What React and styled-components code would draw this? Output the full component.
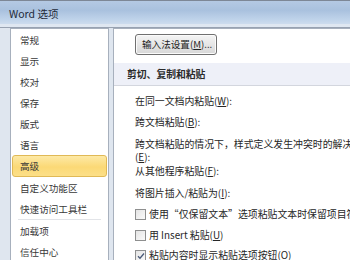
import React from "react";
import styled, { createGlobalStyle } from "styled-components";

const Global = createGlobalStyle`
  html, body { margin: 0; padding: 0; background: #fff; }
  body { font-family: "Noto Sans CJK SC", "Noto Sans", sans-serif; }
`;

const Window = styled.div`
  width: 350px;
  height: 260px;
  display: flex;
  flex-direction: column;
  background: #d5e1ef;
  overflow: hidden;
  border-top: 1px solid #7d8796;
  box-sizing: border-box;
`;

const TitleBar = styled.div`
  flex: none;
  height: 21px;
  display: flex;
  align-items: center;
  padding: 2px 0 0 9px;
  background: linear-gradient(#b4c9e3, #a9c1de 40%, #bfd3ea 80%, #cddced);
  font-size: 10.5px;
  color: #1f2a3a;
  border-bottom: 3px solid #dfe7f1;
`;

const Body = styled.div`
  flex: 1;
  display: flex;
  gap: 4px;
  padding-left: 10px;
  min-height: 0;
  border-top: 1px solid #98a2b1;
  background: #dfe6ef;
`;

const Sidebar = styled.div`
  width: 95px;
  flex: none;
  background: #fff;
  border: 1px solid #a7b0bd;
  border-bottom: none;
  padding: 0 1px;
  display: flex;
  flex-direction: column;
  overflow: hidden;
`;

const NavItem = styled.div`
  flex: none;
  height: 21px;
  display: flex;
  align-items: center;
  padding-left: 8px;
  font-size: 9.6px;
  color: #383838;
  border-radius: 3px;
  box-sizing: border-box;
  ${(p) =>
    p.$active &&
    `
    background: linear-gradient(#fde9a6, #fbd976 55%, #fcdf88);
    border: 1px solid #e0b956;
    padding-left: 7px;
    height: 22px;
  `}
`;

const NavSep = styled.div`
  flex: none;
  height: 1px;
  margin: 0 6px;
  background: #e2e4e8;
`;

const Content = styled.div`
  flex: 1;
  background: #fff;
  border-left: 1px solid #a7b0bd;
  border-top: 1px solid #a7b0bd;
  display: flex;
  flex-direction: column;
  padding-top: 5px;
  min-width: 0;
  overflow: hidden;
`;

const ButtonRow = styled.div`
  flex: none;
  padding-left: 21px;
  height: 20px;
  display: flex;
  align-items: center;
`;

const Button = styled.div`
  height: 19px;
  padding: 0 4px 0 6px;
  display: flex;
  align-items: center;
  border: 1px solid #707070;
  border-radius: 3px;
  background: linear-gradient(#f4f4f4, #e6e6e6 50%, #d8d8d8);
  font-size: 9.6px;
  color: #222;
  box-shadow: inset 0 0 0 1px #fbfbfb;
`;

const SectionHeader = styled.div`
  flex: none;
  margin-top: 9px;
  height: 22px;
  display: flex;
  align-items: center;
  padding-left: 13px;
  background: #eef0f8;
  border-bottom: 1px solid #d3d6de;
  font-size: 9.8px;
  font-weight: 700;
  color: #2a2a2a;
`;

const Rows = styled.div`
  flex: none;
  padding-left: 21px;
  padding-top: 8px;
  display: flex;
  flex-direction: column;
`;

const Row = styled.div`
  flex: none;
  height: ${(p) => p.$h || 21}px;
  display: flex;
  align-items: flex-start;
  white-space: nowrap;
  font-size: 9.9px;
  line-height: 14px;
  color: #262626;
`;

const Box = styled.span`
  width: 9px;
  height: 9px;
  flex: none;
  border: 1px solid #8e8f8f;
  background: linear-gradient(135deg, #e4e4e4, #fafafa);
  margin: 2px 3px 0 0;
  display: inline-flex;
  align-items: center;
  justify-content: center;
`;

const U = styled.span`
  text-decoration: underline;
`;

const Check = ({ checked }) => (
  <Box>
    {checked && (
      <svg width="8" height="8" viewBox="0 0 8 8">
        <path d="M1 4.2 L3 6.2 L7 1.5" fill="none" stroke="#4a5a78" strokeWidth="1.3" />
      </svg>
    )}
  </Box>
);

const nav = ["常规", "显示", "校对", "保存", "版式", "语言", "高级", "自定义功能区", "快速访问工具栏"];

export default function App() {
  return (
    <>
      <Global />
      <Window>
        <TitleBar>Word 选项</TitleBar>
        <Body>
          <Sidebar>
            {nav.map((n) => (
              <NavItem key={n} $active={n === "高级"}>
                {n}
              </NavItem>
            ))}
            <NavSep />
            <NavItem>加载项</NavItem>
            <NavItem>信任中心</NavItem>
          </Sidebar>
          <Content>
            <ButtonRow>
              <Button>
                输入法设置(<U>M</U>)...
              </Button>
            </ButtonRow>
            <SectionHeader>剪切、复制和粘贴</SectionHeader>
            <Rows>
              <Row $h={21}>
                在同一文档内粘贴(<U>W</U>):
              </Row>
              <Row $h={22}>
                跨文档粘贴(<U>B</U>):
              </Row>
              <Row $h={13}>跨文档粘贴的情况下，样式定义发生冲突时的解决方法</Row>
              <Row $h={14}>
                (<U>E</U>):
              </Row>
              <Row $h={22}>
                从其他程序粘贴(<U>F</U>):
              </Row>
              <Row $h={21}>
                将图片插入/粘贴为(<U>I</U>):
              </Row>
              <Row $h={21}>
                <Check />
                使用“仅保留文本”选项粘贴文本时保留项目符号和编号(<U>L</U>)
              </Row>
              <Row $h={20}>
                <Check />
                用 Insert 粘贴(<U>U</U>)
              </Row>
              <Row $h={20}>
                <Check checked />
                粘贴内容时显示粘贴选项按钮(<U>O</U>)
              </Row>
            </Rows>
          </Content>
        </Body>
      </Window>
    </>
  );
}
